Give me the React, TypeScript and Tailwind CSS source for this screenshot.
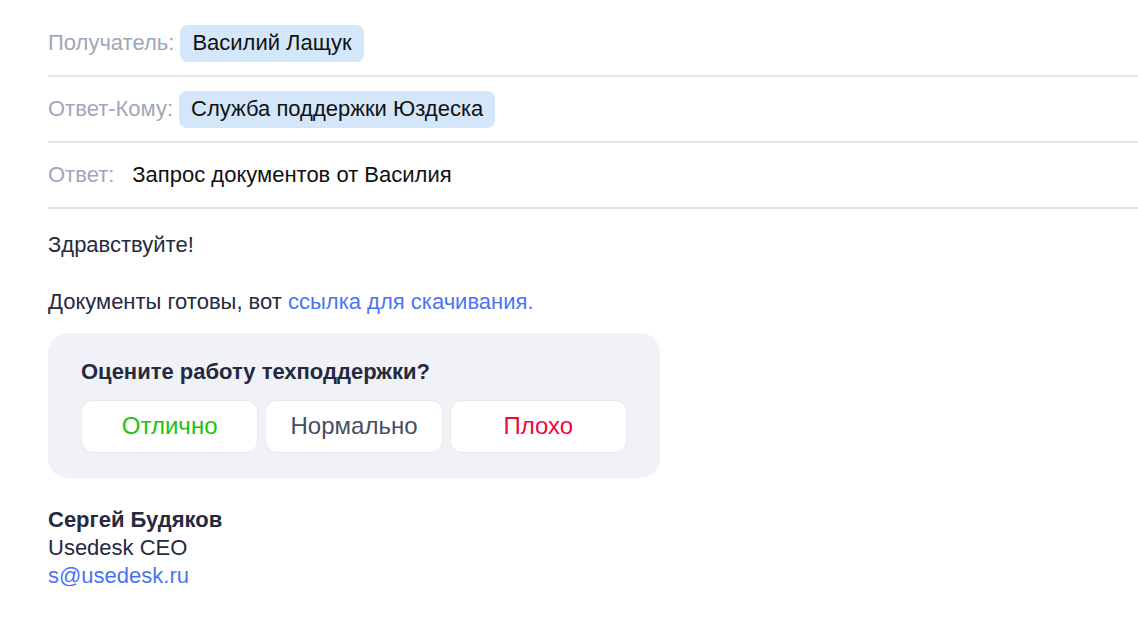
import React from "react";

function Row({ label, children }: { label: string; children: React.ReactNode }) {
  return (
    <div className="flex h-[66px] items-center border-b-2 border-[#e5e5e5]">
      <span className="text-[#a0a7b9]">{label}</span>
      <div className="ml-[6px]">{children}</div>
    </div>
  );
}

function Chip({ children }: { children: React.ReactNode }) {
  return (
    <span className="inline-flex h-[37px] items-center rounded-[8px] bg-[#d3e6fa] px-[12px] text-[#111111]">
      {children}
    </span>
  );
}

export default function App() {
  return (
    <div
      className="min-h-[620px] bg-white pl-[48px] pt-[11px] text-[22px] leading-[28px]"
      style={{ fontFamily: '"Liberation Sans", Arial, sans-serif' }}
    >
      <Row label="Получатель:">
        <Chip>Василий Лащук</Chip>
      </Row>
      <Row label="Ответ-Кому:">
        <Chip>Служба поддержки Юздеска</Chip>
      </Row>
      <Row label="Ответ:">
        <span className="px-[12px] text-[#111111]">Запрос документов от Василия</span>
      </Row>

      <div className="mt-[22px] text-[#252a3f] leading-[28.5px]">
        Здравствуйте!
        <br />
        <br />
        Документы готовы, вот <span className="text-[#4a74f5]">ссылка для скачивания.</span>
      </div>

      <div className="mt-[16px] w-[612px] rounded-[20px] bg-[#f1f2f7] px-[33px] pb-[25px] pt-[25px]">
        <div className="mb-[14px] font-bold text-[#232a40]">Оцените работу техподдержки?</div>
        <div className="flex gap-[7px] text-[24px]">
          <button className="h-[53px] flex-1 rounded-[12px] border border-[#e8e9ef] bg-white text-[#22c20a]">
            Отлично
          </button>
          <button className="h-[53px] flex-1 rounded-[12px] border border-[#e8e9ef] bg-white text-[#474e63]">
            Нормально
          </button>
          <button className="h-[53px] flex-1 rounded-[12px] border border-[#e8e9ef] bg-white text-[#f0073a]">
            Плохо
          </button>
        </div>
      </div>

      <div className="mt-[28px] text-[#252a3f]">
        <div className="font-bold">Сергей Будяков</div>
        <div>Usedesk CEO</div>
        <div className="text-[#4a74f5]">s@usedesk.ru</div>
      </div>
    </div>
  );
}
